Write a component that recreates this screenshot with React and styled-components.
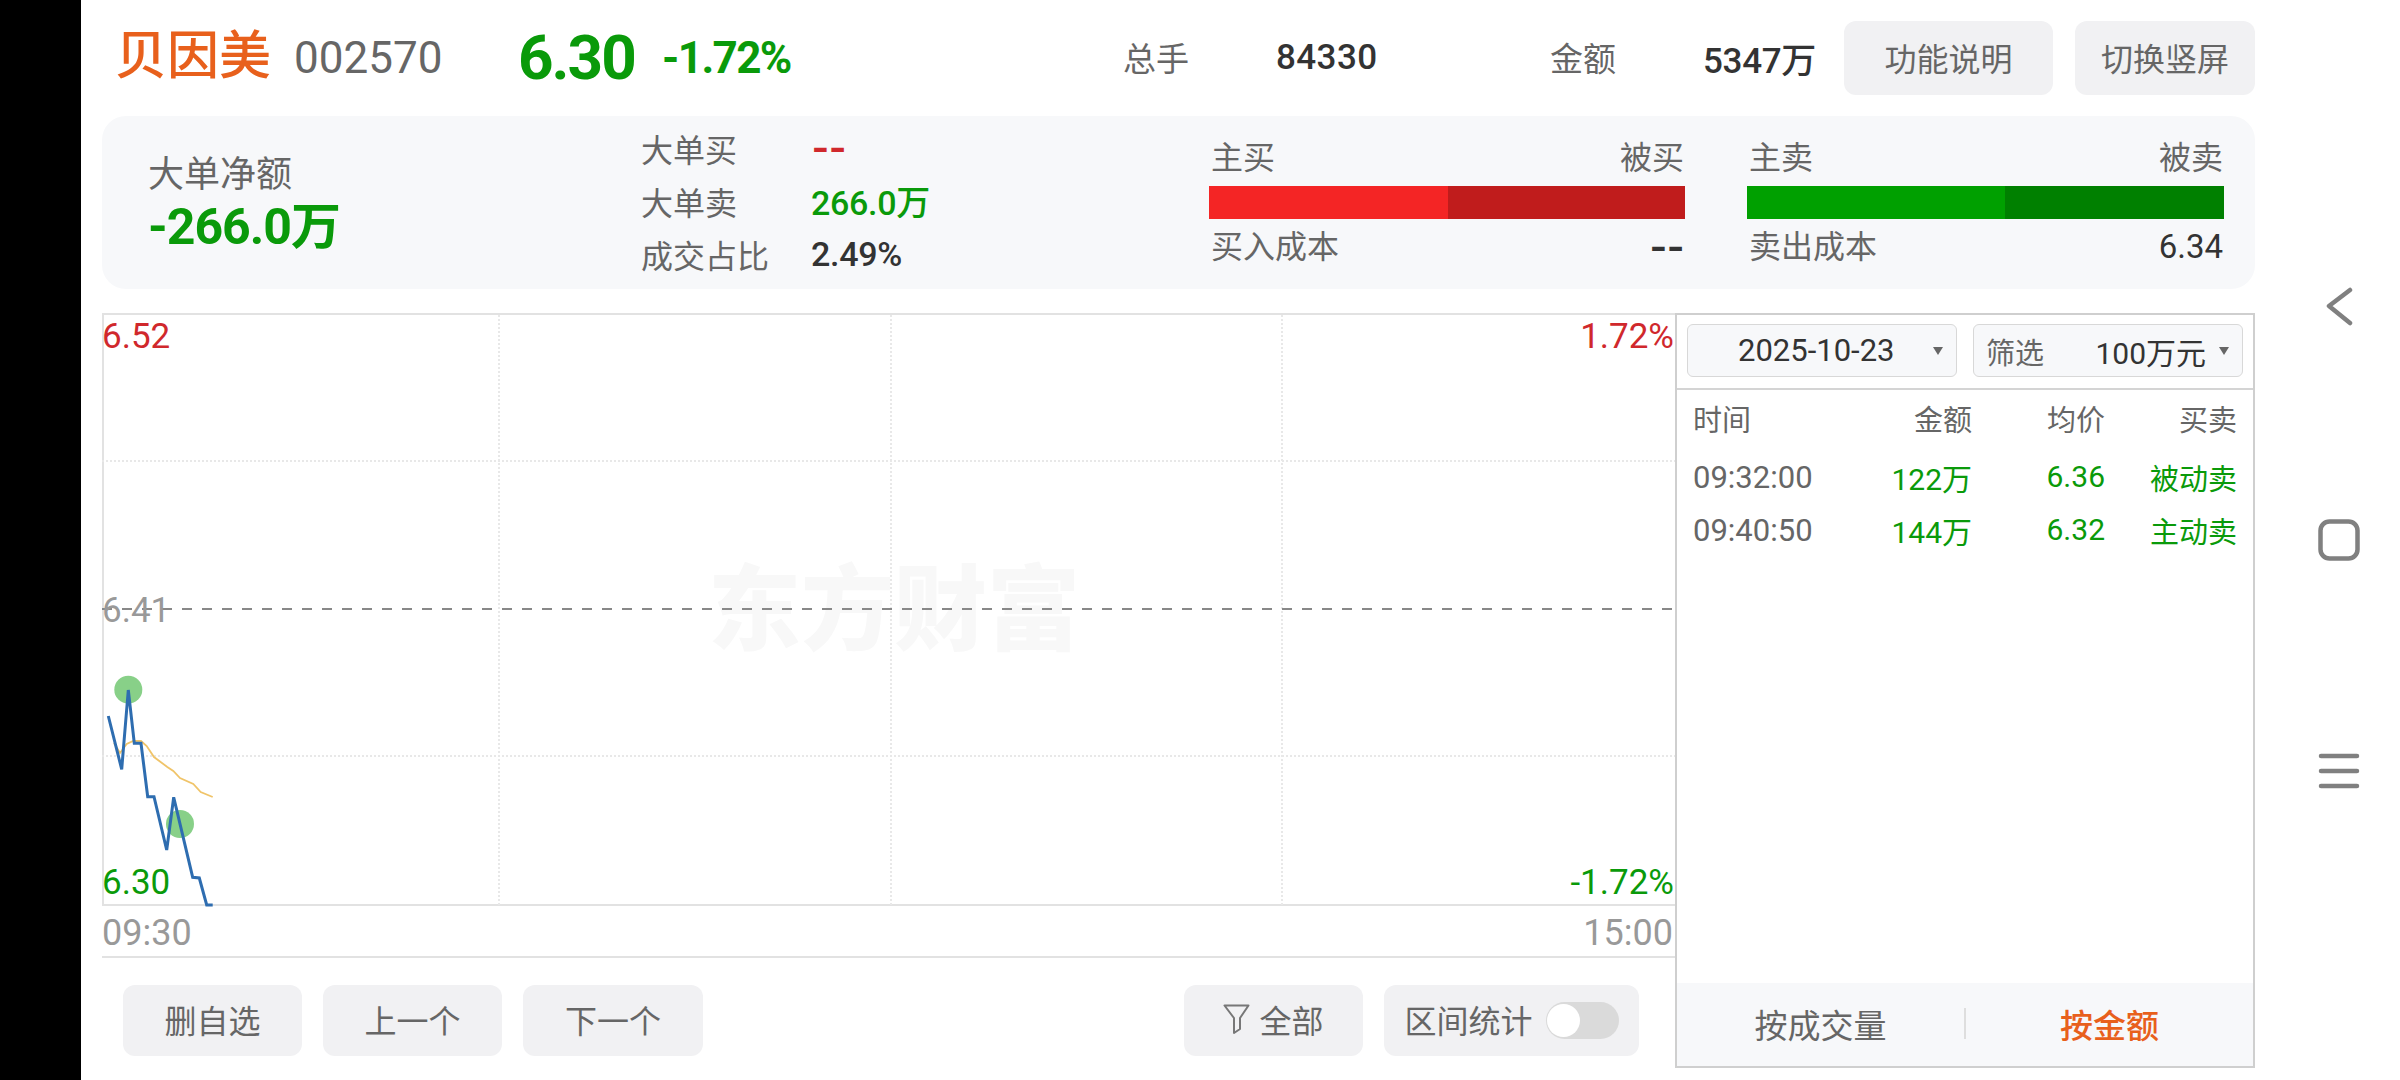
import React from 'react';
import styled, { createGlobalStyle } from 'styled-components';

const Global = createGlobalStyle`
  html, body { margin: 0; padding: 0; background: #fff; }
  body { font-family: Roboto, "Noto Sans CJK SC", sans-serif; color: #666; }
  * { box-sizing: border-box; }
`;
const GREEN = '#0a9a0a';
const RED = '#d0282c';
const Page = styled.div`display: flex; width: 2400px; height: 1080px; overflow: hidden; background: #fff;`;
const Bezel = styled.div`width: 81px; flex: none; background: #000;`;
const Content = styled.div`width: 2174px; flex: none; padding-left: 21px; display: flex; flex-direction: column;`;
const NavRail = styled.div`flex: 1; display: flex; flex-direction: column; align-items: center; padding: 287px 0 0 22px; gap: 192px;`;

const TopBar = styled.div`height: 116px; display: flex; align-items: center; padding: 0 0 0 13px;`;
const StockName = styled.span`font-size: 52px; line-height: 56px; color: #e8601c; width: 179px; font-weight: 500; margin-top: -2px;`;
const StockCode = styled.span`font-size: 44px; color: #666; width: 224px;`;
const Price = styled.span`font-size: 62px; font-weight: 700; color: ${GREEN}; width: 144px; letter-spacing: -2px; margin-top: -2px;`;
const Pct = styled.span`font-size: 44px; font-weight: 700; color: ${GREEN}; width: 461px; letter-spacing: -1.6px; margin-top: -1px;`;
const StatLabel = styled.span`font-size: 33px; color: #666; width: ${p => p.$w}px; margin-top: -2px;`;
const StatValue = styled.span`font-size: 35px; font-weight: 500; color: #333; width: ${p => p.$w}px; white-space: nowrap; letter-spacing: ${p => p.$ls}px; margin-top: -2px;`;
const GrayButton = styled.div`
  width: ${p => p.$w}px; height: ${p => p.$h || 71}px; margin-left: ${p => p.$ml || 0}px; background: #f1f1f3; border-radius: 12px;
  display: flex; align-items: center; justify-content: center; gap: ${p => p.$gap || 0}px; font-size: 32px; color: #666; flex: none;
  padding-bottom: 3px;
`;

const Summary = styled.div`height: 173px; background: #f7f8fa; border-radius: 24px; display: flex; position: relative;`;
const NetBlock = styled.div`width: 539px; padding: 37px 0 0 46px; flex: none;`;
const NetLabel = styled.div`font-size: 36px; line-height: 44px; color: #666;`;
const NetValue = styled.div`font-size: 50px; line-height: 56px; font-weight: 700; color: ${GREEN}; letter-spacing: -1px; margin-top: 2px;`;
const DetailCol = styled.div`width: 568px; flex: none; padding-top: 5px; display: flex; flex-direction: column;`;
const DetailRow = styled.div`height: 53px; display: flex; align-items: center; font-size: 32px;`;
const DetailLabel = styled.span`width: 170px; color: #666;`;
const DetailValue = styled.span`color: ${p => p.$c}; font-weight: 500; font-size: 34px; letter-spacing: -0.3px;`;
const Dashes = styled.span`color: ${p => p.$c}; font-weight: 900; font-size: 34px; letter-spacing: -1.5px; transform: scaleX(1.25); transform-origin: ${p => p.$origin};`;
const BarGroup = styled.div`width: ${p => p.$w}px; margin-right: ${p => p.$mr || 0}px; flex: none; padding-top: 24px;`;
const BarLabels = styled.div`display: flex; justify-content: space-between; font-size: 32px; line-height: 36px; color: #666; padding: 0 1px 0 2px;`;
const Bar = styled.div`height: 33px; margin-top: 10px; display: flex;`;
const BarPart = styled.div`height: 100%; background: ${p => p.$c}; width: ${p => p.$w}px; flex: none;`;
const BarFoot = styled(BarLabels)`margin-top: 10px; align-items: center;`;
const FootValue = styled.span`color: #333; font-size: 33px;`;

const Body = styled.div`display: flex; margin-top: 24px; height: 755px;`;
const LeftCol = styled.div`width: 1573px; flex: none; display: flex; flex-direction: column;`;
const Chart = styled.div`
  position: relative; height: 593px; border-top: 2px solid #e2e2e2; border-left: 2px solid #e2e2e2; border-bottom: 2px solid #e2e2e2;
`;
const ChartSvg = styled.svg`position: absolute; left: -2px; top: -2px; width: 1573px; height: 593px; overflow: visible;`;
const Watermark = styled.div`
  position: absolute; left: 604px; top: 245px; font-size: 93px; line-height: 104px; font-weight: 900; color: #f8f8f8; white-space: nowrap;
`;
const ChartLabel = styled.span`
  position: absolute; font-size: 35px; line-height: 40px; color: ${p => p.$c};
  ${p => p.$right ? 'right: 1px;' : 'left: -2px;'} top: ${p => p.$top}px;
`;
const AxisRow = styled.div`
  height: 52px; display: flex; justify-content: space-between; align-items: center; font-size: 36px; color: #999;
  border-bottom: 2px solid #e2e2e2; padding-right: 2px; padding-top: 4px;
`;
const ActionRow = styled.div`display: flex; padding: 27px 36px 0 21px;`;
const Spacer = styled.div`flex: 1;`;
const Toggle = styled.div`width: 73px; height: 37px; border-radius: 19px; background: #dadada; position: relative; margin: 3px 0 0 13px; flex: none;`;
const Knob = styled.div`position: absolute; left: 1px; top: 2px; width: 33px; height: 33px; border-radius: 50%; background: #fff;`;

const RightPanel = styled.div`width: 580px; flex: none; height: 755px; border: 2px solid #cfcfcf; display: flex; flex-direction: column;`;
const Selects = styled.div`height: 75px; display: flex; gap: 16px; padding: 9px 10px 0; border-bottom: 2px solid #d4d4d4; flex: none;`;
const SelectBox = styled.div`
  width: 270px; height: 53px; background: #f7f8fa; border: 1px solid #d8d8d8; border-radius: 6px; position: relative; flex: none;
  display: flex; align-items: center; font-size: ${p => p.$fs || 30}px; color: #333; padding: 0 ${p => p.$pr}px 0 ${p => p.$pl}px; justify-content: space-between;
`;
const Caret = styled.i`
  position: absolute; right: 13px; top: 22px; width: 0; height: 0; border-left: 5px solid transparent; border-right: 5px solid transparent; border-top: 8px solid #666;
`;
const FilterLabel = styled.span`color: #666; font-size: 29px;`;
const TableHead = styled.div`
  display: grid; grid-template-columns: 168px 111px 133px 132px; height: 53px; align-items: center; padding-left: 16px; font-size: 29px; color: #666; margin-top: 1px; flex: none;
`;
const TableBody = styled.div`margin-top: 6px; display: flex; flex-direction: column; flex: 1;`;
const TableRow = styled(TableHead)`margin-top: 0; font-size: 30px; color: ${GREEN};`;
const Cell = styled.span`text-align: right; white-space: nowrap;`;
const TimeCell = styled.span`text-align: left; color: #666;`;
const ClockCell = styled(TimeCell)`font-size: 31px; margin-top: 1px;`;
const SideCell = styled(Cell)`font-size: 29px;`;
const PanelFoot = styled.div`height: 83px; background: #f7f8fa; display: flex; align-items: center; font-size: 33px; flex: none; padding-bottom: 2px;`;
const FootTab = styled.div`width: ${p => p.$w}px; text-align: center; color: ${p => p.$on ? '#e8601c' : '#666'}; font-weight: ${p => p.$on ? 500 : 400};`;
const FootSep = styled.div`width: 2px; height: 31px; background: #dedede; flex: none;`;

const NavIcon = styled.svg`display: block; flex: none;`;

const price = '108.3,716 121.7,769.3 128.3,690 134.3,743.3 141,743.3 147.7,796.7 154,796.7 166.7,850 173.7,797.3 192.7,877.3 199.3,878 206.7,905 212.7,905';
const avg = '114,743 120,753 126.7,744 133.3,741 141,741 146.7,746 154,757 167.3,767 173.3,771 180,778 193.3,784 200.7,792 212.7,797';

const rows = [
  { t: '09:32:00', a: '122万', p: '6.36', s: '被动卖' },
  { t: '09:40:50', a: '144万', p: '6.32', s: '主动卖' },
];

export default function App() {
  return (
    <Page>
      <Global />
      <Bezel />
      <Content>
        <TopBar>
          <StockName>贝因美</StockName>
          <StockCode>002570</StockCode>
          <Price>6.30</Price>
          <Pct>-1.72%</Pct>
          <StatLabel $w={153}>总手</StatLabel>
          <StatValue $w={274} $ls={0.4}>84330</StatValue>
          <StatLabel $w={153}>金额</StatLabel>
          <StatValue $w={141} $ls={-0.3}>5347万</StatValue>
          <GrayButton $w={209} $h={74}>功能说明</GrayButton>
          <GrayButton $w={180} $h={74} $ml={22}>切换竖屏</GrayButton>
        </TopBar>
        <Summary>
          <NetBlock>
            <NetLabel>大单净额</NetLabel>
            <NetValue>-266.0万</NetValue>
          </NetBlock>
          <DetailCol>
            <DetailRow><DetailLabel>大单买</DetailLabel><Dashes $c={RED} $origin="left">--</Dashes></DetailRow>
            <DetailRow><DetailLabel>大单卖</DetailLabel><DetailValue $c={GREEN}>266.0万</DetailValue></DetailRow>
            <DetailRow><DetailLabel>成交占比</DetailLabel><DetailValue $c="#333">2.49%</DetailValue></DetailRow>
          </DetailCol>
          <BarGroup $w={476} $mr={62}>
            <BarLabels><span>主买</span><span>被买</span></BarLabels>
            <Bar><BarPart $c="#f42525" $w={239} /><BarPart $c="#c01c1c" $w={237} /></Bar>
            <BarFoot><span>买入成本</span><Dashes $c="#333" $origin="right">--</Dashes></BarFoot>
          </BarGroup>
          <BarGroup $w={477}>
            <BarLabels><span>主卖</span><span>被卖</span></BarLabels>
            <Bar><BarPart $c="#00a000" $w={258} /><BarPart $c="#008000" $w={219} /></Bar>
            <BarFoot><span>卖出成本</span><FootValue>6.34</FootValue></BarFoot>
          </BarGroup>
        </Summary>
        <Body>
          <LeftCol>
            <Chart>
              <Watermark>东方财富</Watermark>
              <ChartSvg viewBox="102 313 1573 593">
                <g stroke="#e8e8e8" strokeWidth="2" strokeDasharray="2 2" fill="none">
                  <path d="M499 315V905M891 315V905M1282 315V905M102 461H1675M102 756H1675" />
                </g>
                <path d="M102 609H1675" stroke="#888" strokeWidth="2" strokeDasharray="10 10" fill="none" />
                <circle cx="128.3" cy="689.7" r="14" fill="#88d088" />
                <circle cx="180" cy="824" r="14" fill="#88d088" />
                <polyline points={avg} fill="none" stroke="#f0c469" strokeWidth="1.8" />
                <polyline points={price} fill="none" stroke="#2e6db0" strokeWidth="3" />
              </ChartSvg>
              <ChartLabel $c={RED} $top={2}>6.52</ChartLabel>
              <ChartLabel $c={RED} $right $top={2}>1.72%</ChartLabel>
              <ChartLabel $c="#999" $top={276}>6.41</ChartLabel>
              <ChartLabel $c={GREEN} $top={548}>6.30</ChartLabel>
              <ChartLabel $c={GREEN} $right $top={548}>-1.72%</ChartLabel>
            </Chart>
            <AxisRow><span>09:30</span><span>15:00</span></AxisRow>
            <ActionRow>
              <GrayButton $w={179}>删自选</GrayButton>
              <GrayButton $w={179} $ml={21}>上一个</GrayButton>
              <GrayButton $w={180} $ml={21}>下一个</GrayButton>
              <Spacer />
              <GrayButton $w={179} $gap={9}>
                <svg width="27" height="32" viewBox="0 0 27 32" fill="none" stroke="#777" strokeWidth="2" strokeLinejoin="round">
                  <path d="M1.5 2.5H25.5L17 15V26L11 30V15Z" />
                </svg>
                全部
              </GrayButton>
              <GrayButton $w={255} $ml={21}>
                区间统计
                <Toggle><Knob /></Toggle>
              </GrayButton>
            </ActionRow>
          </LeftCol>
          <RightPanel>
            <Selects>
              <SelectBox $pl={50} $pr={60} $fs={31}>2025-10-23<Caret /></SelectBox>
              <SelectBox $pl={12} $pr={36}><FilterLabel>筛选</FilterLabel><span>100万元</span><Caret /></SelectBox>
            </Selects>
            <TableHead>
              <TimeCell>时间</TimeCell><Cell>金额</Cell><Cell>均价</Cell><Cell>买卖</Cell>
            </TableHead>
            <TableBody>
              {rows.map(r => (
                <TableRow key={r.t}>
                  <ClockCell>{r.t}</ClockCell><Cell>{r.a}</Cell><Cell>{r.p}</Cell><SideCell>{r.s}</SideCell>
                </TableRow>
              ))}
            </TableBody>
            <PanelFoot>
              <FootTab $w={288}>按成交量</FootTab>
              <FootSep />
              <FootTab $w={288} $on>按金额</FootTab>
            </PanelFoot>
          </RightPanel>
        </Body>
      </Content>
      <NavRail>
        <NavIcon width="30" height="40" viewBox="0 0 30 40" fill="none" stroke="#808080" strokeWidth="4.5" strokeLinecap="round" strokeLinejoin="round">
          <path d="M26 3L5 19L26 36" />
        </NavIcon>
        <NavIcon width="42" height="42" viewBox="0 0 42 42" fill="none" stroke="#808080" strokeWidth="4.5">
          <rect x="2.5" y="2.5" width="37" height="37" rx="9" />
        </NavIcon>
        <NavIcon width="42" height="36" viewBox="0 0 42 36" fill="none" stroke="#808080" strokeWidth="4.5" strokeLinecap="round">
          <path d="M3 3H39M3 18H39M3 33H39" />
        </NavIcon>
      </NavRail>
    </Page>
  );
}
